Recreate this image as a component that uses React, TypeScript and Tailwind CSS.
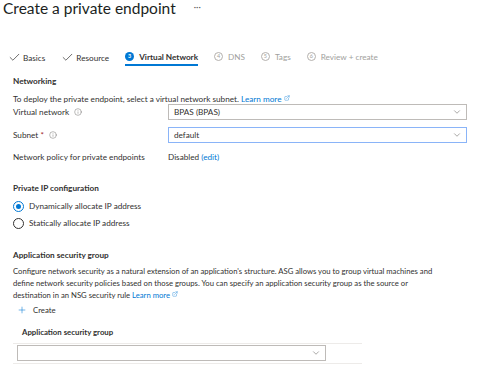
import { ChevronDown, Check, Info, Plus, ExternalLink } from 'lucide-react';

const font = { fontFamily: 'Lato, "Open Sans", sans-serif' };

function Step({ n, label, done, active }: { n: number; label: string; done?: boolean; active?: boolean }) {
    if (done) {
        return (
            <div className="flex items-center gap-[2px] h-[17px] text-[#323130]">
                <Check className="w-[13px] h-[13px]" strokeWidth={1.3} />
                <span>{label}</span>
            </div>
        );
    }
    return (
        <div
            className={
                'flex items-center gap-[5px] h-[17px] border-b-2 ' +
                (active ? 'font-bold text-[#323130] border-[#0078d4]' : 'text-[#a19f9d] border-transparent')
            }
        >
            <span
                className={
                    'flex items-center justify-center w-[9px] h-[9px] rounded-full text-[5.5px] leading-none ' +
                    (active ? 'bg-[#0078d4] text-white' : 'border border-[#b3b0ad] text-[#a19f9d]')
                }
            >
                {n}
            </span>
            <span>{label}</span>
        </div>
    );
}

function Dropdown({ value, focused, className = '' }: { value?: string; focused?: boolean; className?: string }) {
    return (
        <div
            className={
                'flex items-center justify-between h-[16px] pl-[5px] pr-[4px] bg-white border ' +
                (focused ? 'border-[#8ab4f8]' : 'border-[#bebbb8]') +
                ' ' +
                className
            }
        >
            <span>{value}</span>
            <ChevronDown className="w-[10px] h-[10px] text-[#605e5c]" strokeWidth={1.3} />
        </div>
    );
}

function Radio({ checked, label }: { checked?: boolean; label: string }) {
    return (
        <div className="flex items-center gap-[5px] h-[12px]">
            <span
                className={
                    'flex items-center justify-center w-[11px] h-[11px] rounded-full border ' +
                    (checked ? 'border-[#0078d4]' : 'border-[#323130]')
                }
            >
                {checked && <span className="w-[5px] h-[5px] rounded-full bg-[#0078d4]" />}
            </span>
            <span>{label}</span>
        </div>
    );
}

export default function App() {
    return (
        <div className="w-[500px] h-[376px] bg-white text-[#323130] text-[8.2px] leading-[12px] overflow-hidden" style={font}>
            {/* Header */}
            <div className="flex items-center pl-[3px] h-[17px]">
                <h1 className="text-[15.5px] leading-[17px] text-[#201f1e]">Create a private endpoint</h1>
                <span className="ml-[18px] text-[9px] text-[#605e5c] -mt-[3px]">···</span>
            </div>

            {/* Steps */}
            <div className="flex items-center gap-[16px] pl-[8px] mt-[32px]">
                <Step n={1} label="Basics" done />
                <Step n={2} label="Resource" done />
                <Step n={3} label="Virtual Network" active />
                <Step n={4} label="DNS" />
                <Step n={5} label="Tags" />
                <Step n={6} label="Review + create" />
            </div>

            <div className="pl-[13px]">
                {/* Networking */}
                <div className="mt-[9px] font-bold">Networking</div>
                <div className="mt-[7px] leading-[10px]">
                    To deploy the private endpoint, select a virtual network subnet.{' '}
                    <span className="text-[#0078d4]">
                        Learn more <ExternalLink className="inline w-[6px] h-[6px] -mt-[4px]" strokeWidth={1.5} />
                    </span>
                </div>
                <div className="grid grid-cols-[155px_299px] items-center gap-y-[7px]">
                    <div className="flex items-center gap-[5px]">
                        Virtual network <Info className="w-[8px] h-[8px] text-[#605e5c]" strokeWidth={1.3} />
                    </div>
                    <Dropdown value="BPAS (BPAS)" />
                    <div className="flex items-center gap-[5px]">
                        <span>
                            Subnet <span className="text-[#a4262c]">*</span>
                        </span>
                        <Info className="w-[8px] h-[8px] text-[#605e5c]" strokeWidth={1.3} />
                    </div>
                    <Dropdown value="default" focused />
                    <div className="leading-[14px]">Network policy for private endpoints</div>
                    <div className="leading-[14px]">
                        Disabled <span className="text-[#0078d4]">(edit)</span>
                    </div>
                </div>

                {/* Private IP */}
                <div className="mt-[18px] font-bold">Private IP configuration</div>
                <div className="mt-[6px] flex flex-col gap-[5px]">
                    <Radio checked label="Dynamically allocate IP address" />
                    <Radio label="Statically allocate IP address" />
                </div>

                {/* ASG */}
                <div className="mt-[20px] font-bold">Application security group</div>
                <div className="mt-[4px] whitespace-nowrap text-[7.7px]">
                    Configure network security as a natural extension of an application's structure. ASG allows you to group virtual machines and
                    <br />
                    define network security policies based on those groups. You can specify an application security group as the source or
                    <br />
                    destination in an NSG security rule{' '}
                    <span className="text-[#0078d4]">
                        Learn more <ExternalLink className="inline w-[6px] h-[6px] -mt-[4px]" strokeWidth={1.5} />
                    </span>
                </div>
                <div className="mt-[3px] flex items-center gap-[6px] pl-[4px] text-[7.8px]">
                    <Plus className="w-[10px] h-[10px] text-[#0078d4]" strokeWidth={1.3} />
                    Create
                </div>
                <div className="w-[349px]">
                    <div className="mt-[10px] pl-[9px] pb-[5px] font-bold text-[7.8px] border-b border-[#edebe9]">Application security group</div>
                    <div className="pt-[1px] pb-[2px] pl-[4px] border-b border-[#edebe9]">
                        <Dropdown className="w-[309px] h-[15px]" />
                    </div>
                </div>
            </div>
        </div>
    );
}
